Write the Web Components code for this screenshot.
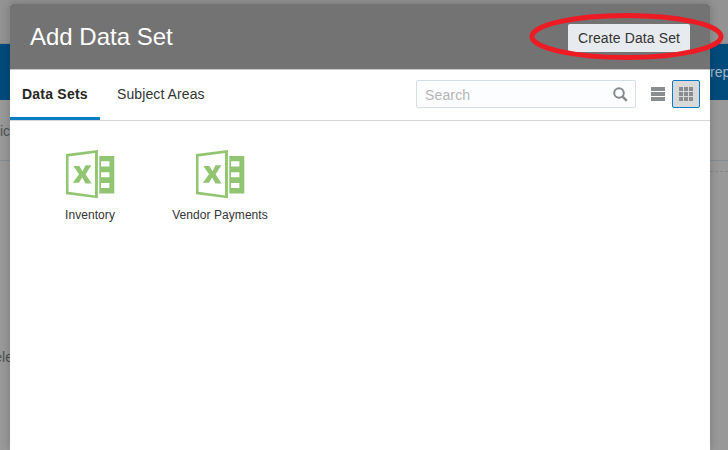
<!DOCTYPE html>
<html lang="en">
<head>
<meta charset="utf-8">
<title>Add Data Set</title>
<style>
html,body{margin:0;height:100%;overflow:hidden}
body{font-family:"Liberation Sans",Arial,sans-serif;color:#333}
</style>
</head>
<body>
<app-window></app-window>
<script>
function define(name, html) {
  const t = document.createElement('template');
  t.innerHTML = html;
  customElements.define(name, class extends HTMLElement {
    constructor() {
      super();
      this.attachShadow({mode: 'open'}).append(t.content.cloneNode(true));
    }
  });
}

define('excel-icon', `<style>:host{display:block;width:50px;height:50px}svg{display:block}</style>
<svg width="50" height="50" viewBox="0 0 50 50" fill="#92c571">
<path fill-rule="evenodd" d="M0 4.1 31.9 0V48.3L0 44.2ZM2.5 6.6V41.8L29 45.4V3.1Z"/>
<path fill-rule="evenodd" d="M33.3 6H48.3V43.6H33.3ZM35 11.3V16.5H43.4V11.3ZM35 22.2V27.2H43.4V22.2ZM35 33V38H43.4V33Z"/>
<path d="M7.4 16H13.4L16.5 21.2 19.5 15.3H25.4L19.6 24.3 25.6 33.4H19.5L16.2 27.5 12.9 32.8H6.8L13 24.2Z"/>
</svg>`);

define('search-box', `<style>
:host{display:flex;box-sizing:border-box;width:220px;height:28px;border:1px solid #d6dfe6;border-radius:2px;background:#fcfdfe;align-items:center;justify-content:space-between;padding:0 7px 0 8px;color:#b5b5b5;font-size:14px;letter-spacing:.15px}
span{padding-top:2px;line-height:16px}
svg{display:block;margin-top:1px}
</style><span>Search</span>
<svg width="15" height="15" viewBox="0 0 15 15" fill="none" stroke="#878b8e" stroke-width="2"><circle cx="6" cy="6" r="4.8"/><path d="M9.3 9.3 13.8 13.8" stroke-width="2.5"/></svg>`);

define('view-switch', `<style>
:host{display:flex}
div{box-sizing:border-box;width:28px;height:28px;border:1px solid transparent;border-radius:2px;display:flex;align-items:center;justify-content:center}
.on{border-color:#0a7bc4;background:#d9d9d9}
svg{display:block}
</style>
<div><svg width="14" height="14" fill="#8a8d90"><path d="M0 0H14V4H0ZM0 5H14V9H0ZM0 10H14V14H0Z"/></svg></div>
<div class="on"><svg width="14" height="14" fill="#8a8d90"><path d="M0 0H4V4H0ZM5 0H9V4H5ZM10 0H14V4H10ZM0 5H4V9H0ZM5 5H9V9H5ZM10 5H14V9H10ZM0 10H4V14H0ZM5 10H9V14H5ZM10 10H14V14H10Z"/></svg></div>`);

define('data-tile', `<style>
:host{display:flex;flex-direction:column;align-items:center;width:130px;font-size:12px;line-height:14px;letter-spacing:.06px;white-space:nowrap}
span{margin-top:8px}
excel-icon{margin-left:2px}
</style><excel-icon></excel-icon><span><slot></slot></span>`);

define('tab-label', `<style>
:host{display:block;box-sizing:border-box;height:51px;padding:16px 12px 0;font-size:14px;line-height:16px;letter-spacing:.1px;border-bottom:3px solid transparent;white-space:nowrap}
:host([active]){width:90px;font-weight:bold;letter-spacing:.22px;border-color:#077dc3;color:#262626}
</style><slot></slot>`);

define('dialog-header', `<style>
:host{display:flex;box-sizing:border-box;height:66px;background:#737373;border-bottom:1px solid #c8c8c8;border-radius:2px 2px 0 0;justify-content:space-between;align-items:center;padding:0 20px}
h1{margin:0;font-weight:normal;font-size:24px;line-height:28px;color:#fff}
button{box-sizing:border-box;width:122px;height:28px;margin:3px 0 0;padding:0 0 1px;border:0;border-radius:2px;background:#e7eaee;color:#333;font:14px "Liberation Sans",Arial,sans-serif;letter-spacing:.12px;white-space:nowrap}
</style><h1>Add Data Set</h1><button>Create Data Set</button>`);

define('data-dialog', `<style>
:host{display:block;height:446px;background:#fff;box-shadow:0 0 10px rgba(0,0,0,.22);border-radius:2px 2px 0 0}
nav{display:flex;box-sizing:border-box;height:51px;border-bottom:1px solid #d6d6d6;padding-right:10px}
tab-label[active]{height:50px}
tab-label+tab-label{margin-left:5px}
search-box{margin:10px 8px 0 auto}
view-switch{margin-top:10px}
main{display:flex;padding:29px 0 0 15px}
</style>
<dialog-header></dialog-header>
<nav><tab-label active>Data Sets</tab-label><tab-label>Subject Areas</tab-label><search-box></search-box><view-switch></view-switch></nav>
<main><data-tile>Inventory</data-tile><data-tile>Vendor Payments</data-tile></main>`);

define('page-sliver', `<style>
:host{display:block;height:450px;overflow:hidden;background:#999;font-size:14px;line-height:16px;white-space:nowrap}
.top{height:43px;background:#939393;border-bottom:1px solid #888}
.bar{height:56px;background:#004b7c;color:#a4b5c2;padding-top:20px;box-sizing:border-box}
.row{height:61px;box-sizing:border-box;border-bottom:1px solid #858c92;padding-top:23px;color:#4e5357}
.dash{height:10px;border-bottom:1px dashed #858585}
.low{padding-top:177px;color:#4e5357}
:host([left]) .dash{border-color:transparent}
:host([left]) .row,:host([left]) .low{display:flex;justify-content:flex-end}
:host([left]) .low{margin-right:-3px}
</style><div class="top"></div><div class="bar"><slot name="bar"></slot></div><div class="row"><slot name="row"></slot></div><div class="dash"></div><div class="low"><slot name="low"></slot></div>`);

define('app-window', `<style>
:host{display:grid;grid-template-columns:10px 700px 18px;width:728px;height:450px;overflow:hidden;background:#929292}
data-dialog{margin-top:4px;position:relative}
.mark{position:absolute;left:528px;top:12px}
</style>
<page-sliver left><span slot="row">ic</span><span slot="low">ele</span></page-sliver>
<data-dialog></data-dialog>
<page-sliver><span slot="bar">rep</span></page-sliver>
<svg class="mark" width="196" height="50" fill="none" stroke="#ed1c24" stroke-width="5"><ellipse cx="98.5" cy="24.5" rx="94.5" ry="21"/></svg>`);
</script>
</body>
</html>
